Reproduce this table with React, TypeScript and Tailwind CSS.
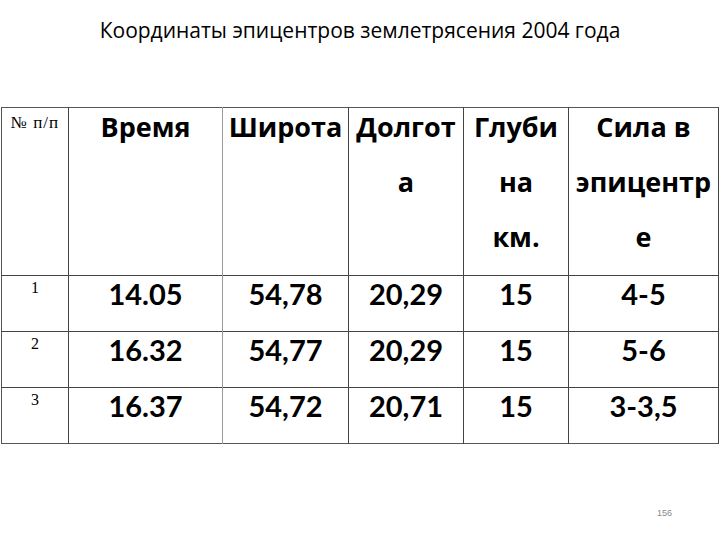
const header = [
  { lines: ["Время"] },
  { lines: ["Широта"] },
  { lines: ["Долгот", "а"] },
  { lines: ["Глуби", "на", "км."] },
  { lines: ["Сила в", "эпицентр", "е"] },
]

const rows = [
  ["1", "14.05", "54,78", "20,29", "15", "4-5"],
  ["2", "16.32", "54,77", "20,29", "15", "5-6"],
  ["3", "16.37", "54,72", "20,71", "15", "3-3,5"],
]

export default function App() {
  return (
    <div className="w-[720px] h-[540px] bg-white relative overflow-hidden">
      <h1 className="pt-[15px] text-center text-[21px] leading-[30px] text-black font-['Open_Sans','Noto_Sans',sans-serif]">
        Координаты эпицентров землетрясения 2004 года
      </h1>

      <table className="mt-[62px] ml-[1px] w-[717px] table-fixed border-collapse border border-[#555]">
        <colgroup>
          <col className="w-[67px]" />
          <col className="w-[154px]" />
          <col className="w-[126px]" />
          <col className="w-[115px]" />
          <col className="w-[105px]" />
          <col className="w-[150px]" />
        </colgroup>
        <thead>
          <tr className="h-[168px] align-top">
            <th className="border-r border-[#444] pt-[5px] text-center text-[17px] leading-[20px] tracking-[1px] font-normal font-['Liberation_Serif',serif]">
              № п/п
            </th>
            {header.map((h, i) => (
              <th
                key={i}
                className={
                  "text-center text-[27px] leading-[55px] font-bold text-black font-['Open_Sans','Noto_Sans',sans-serif] " +
                  (i === 0 ? "border-r border-[#999]" : "border-r border-[#444]")
                }
              >
                <div className="-mt-[9px]">
                  {h.lines.map((l) => (
                    <div key={l} className="whitespace-nowrap">{l}</div>
                  ))}
                </div>
              </th>
            ))}
          </tr>
        </thead>
        <tbody>
          {rows.map((r) => (
            <tr key={r[0]} className="h-[56px] align-top border-t border-[#444]">
              <td className="border-r border-[#444] pt-[2px] text-center text-[16px] leading-[20px] font-['Liberation_Serif',serif]">
                {r[0]}
              </td>
              {r.slice(1).map((c, i) => (
                <td
                  key={i}
                  className={
                    "pt-[1px] text-center text-[29px] leading-[34px] font-bold text-black font-['Lato','Noto_Sans',sans-serif] " +
                    (i === 0 ? "border-r border-[#999]" : "border-r border-[#444]")
                  }
                >
                  {c}
                </td>
              ))}
            </tr>
          ))}
        </tbody>
      </table>

      <div className="absolute left-[657px] top-[507px] text-[9px] leading-[12px] text-[#888] font-['Liberation_Sans',sans-serif]">
        156
      </div>
    </div>
  )
}
